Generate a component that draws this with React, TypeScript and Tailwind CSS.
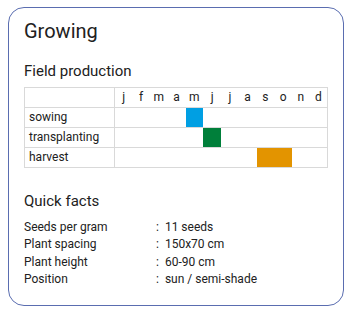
import React from "react";

const months = ["j", "f", "m", "a", "m", "j", "j", "a", "s", "o", "n", "d"];

const rows: { label: string; color: string; from: number; to: number }[] = [
  { label: "sowing", color: "bg-[#009fe3]", from: 4, to: 4 },
  { label: "transplanting", color: "bg-[#007f3a]", from: 5, to: 5 },
  { label: "harvest", color: "bg-[#e39400]", from: 8, to: 9 },
];

const facts = [
  ["Seeds per gram", "11 seeds"],
  ["Plant spacing", "150x70 cm"],
  ["Plant height", "60-90 cm"],
  ["Position", "sun / semi-shade"],
];

export default function App() {
  return (
    <div
      className="w-[345px] h-[319px] bg-white pt-[7px] pl-[8px] text-[#212121]"
      style={{ fontFamily: "Roboto, 'Noto Sans', sans-serif" }}
    >
      <div className="w-[336px] h-[299px] border border-[#5a6db0] rounded-[16px] px-[15px] pt-[9px]">
        <h1 className="text-[20px] leading-[28px]">Growing</h1>
        <h2 className="mt-[16px] text-[15px] leading-[20px]">Field production</h2>
        <table className="mt-[6px] w-[304px] border-collapse table-fixed text-[12px]">
          <colgroup>
            <col className="w-[90px]" />
            {months.map((_, i) => (
              <col key={i} />
            ))}
          </colgroup>
          <tbody>
            <tr className="h-[20px]">
              <td className="border border-[#d9d9d9] p-0"></td>
              {months.map((m, i) => (
                <td
                  key={i}
                  className={`p-0 text-center leading-[19px] border-y border-[#d9d9d9] ${
                    i === 0 ? "border-l" : ""
                  } ${i === 11 ? "border-r" : ""}`}
                >
                  {m}
                </td>
              ))}
            </tr>
            {rows.map((r) => (
              <tr key={r.label} className="h-[20px]">
                <td className="border border-[#d9d9d9] pl-[4px] py-0 leading-[19px]">{r.label}</td>
                {months.map((_, i) => (
                  <td
                    key={i}
                    className={`p-0 border-y border-[#d9d9d9] ${i === 11 ? "border-r" : ""} ${
                      i >= r.from && i <= r.to ? r.color : ""
                    }`}
                  ></td>
                ))}
              </tr>
            ))}
          </tbody>
        </table>
        <h2 className="mt-[23px] text-[15px] leading-[20px]">Quick facts</h2>
        <div className="mt-[8px] flex flex-col text-[12px] leading-[17.3px]">
          {facts.map(([k, v]) => (
            <div key={k} className="flex">
              <span className="w-[132px] shrink-0">{k}</span>
              <span>:</span>
              <span className="ml-[6px]">{v}</span>
            </div>
          ))}
        </div>
      </div>
    </div>
  );
}
